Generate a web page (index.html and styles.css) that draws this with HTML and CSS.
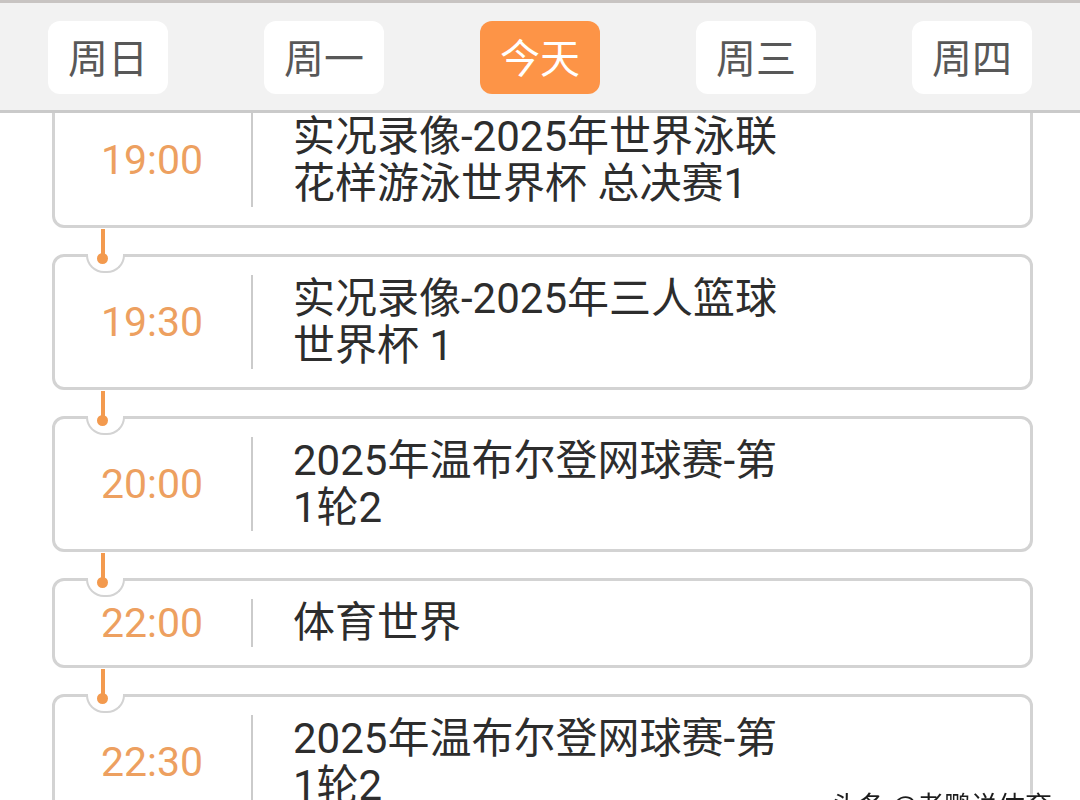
FILE: index.html
```html
<!DOCTYPE html>
<html lang="zh-CN">
<head>
<meta charset="utf-8">
<title>节目单</title>
<link rel="stylesheet" href="styles.css">
</head>
<body>
<header class="week-bar">
  <nav class="days">
    <span class="day">周日</span>
    <span class="day">周一</span>
    <span class="day day-active">今天</span>
    <span class="day">周三</span>
    <span class="day">周四</span>
  </nav>
</header>
<main class="schedule">
  <ol class="track">
    <li class="show">
      <time class="show-time">19:00</time>
      <p class="show-title">实况录像-2025年世界泳联花样游泳世界杯 总决赛1</p>
    </li>
    <li class="show linked">
      <span class="node"></span>
      <time class="show-time">19:30</time>
      <p class="show-title">实况录像-2025年三人篮球世界杯 1</p>
    </li>
    <li class="show linked">
      <span class="node"></span>
      <time class="show-time">20:00</time>
      <p class="show-title">2025年温布尔登网球赛-第1轮2</p>
    </li>
    <li class="show linked">
      <span class="node"></span>
      <time class="show-time">22:00</time>
      <p class="show-title">体育世界</p>
    </li>
    <li class="show linked">
      <span class="node"></span>
      <time class="show-time">22:30</time>
      <p class="show-title">2025年温布尔登网球赛-第1轮2</p>
    </li>
  </ol>
</main>
<div class="watermark">头条 @老鹏说体育</div>
</body>
</html>
```
FILE: styles.css
```css
* {
  box-sizing: border-box;
}

html, body {
  margin: 0;
  padding: 0;
  background: #ffffff;
  height: 800px;
  overflow: hidden;
  font-family: Roboto, "Noto Sans CJK SC", sans-serif;
}

.week-bar {
  background: #f2f2f2;
  border-top: 3px solid #c8c4c2;
  border-bottom: 3px solid #cacaca;
  padding: 18px 48px 16px;
  position: relative;
  z-index: 2;
}

.days {
  display: flex;
  justify-content: space-between;
}

.day {
  width: 120px;
  height: 73px;
  border-radius: 12px;
  background: #ffffff;
  color: #585858;
  font-family: "Noto Sans CJK SC", sans-serif;
  font-size: 40px;
  line-height: 1;
  padding-bottom: 4px;
  display: flex;
  align-items: center;
  justify-content: center;
}

.day-active {
  background: #fd9447;
  color: #ffffff;
}

.schedule {
  height: 687px;
  overflow: hidden;
}

.track {
  list-style: none;
  margin: -21px 0 0;
  padding: 0 47px 0 52px;
  display: flex;
  flex-direction: column;
  gap: 26px;
}

.show {
  position: relative;
  display: flex;
  align-items: stretch;
  border: 3px solid #d3d3d3;
  border-radius: 12px;
  padding: 18px 0;
  background: #ffffff;
}

.linked::before {
  content: "";
  position: absolute;
  top: -3px;
  left: 31px;
  width: 35px;
  height: 17px;
  background: #ffffff;
  border: 2.5px solid #d3d3d3;
  border-top: 0;
  border-radius: 0 0 18px 18px;
}

.node {
  position: absolute;
  top: -4.5px;
  left: 42px;
  width: 11px;
  height: 11px;
  border-radius: 50%;
  background: #f39a4e;
}

.node::before {
  content: "";
  position: absolute;
  bottom: 5px;
  left: 3.5px;
  width: 4px;
  height: 30px;
  background: #f39a4e;
}

.show-time {
  flex: 0 0 198px;
  display: flex;
  align-items: center;
  justify-content: center;
  border-right: 2px solid #cbcbcb;
  color: #eda060;
  font-size: 41px;
  padding-right: 2px;
}

.show-title {
  margin: 0;
  padding-left: 40px;
  width: 545px;
  color: #2d2d2d;
  font-size: 42px;
  line-height: 47px;
}

.watermark {
  position: fixed;
  right: 28px;
  bottom: -24px;
  font-family: "Noto Sans CJK SC", sans-serif;
  font-size: 27px;
  color: #1c1c1c;
  text-shadow: 0 0 2px #ffffff, 0 0 2px #ffffff;
  z-index: 3;
}
```
